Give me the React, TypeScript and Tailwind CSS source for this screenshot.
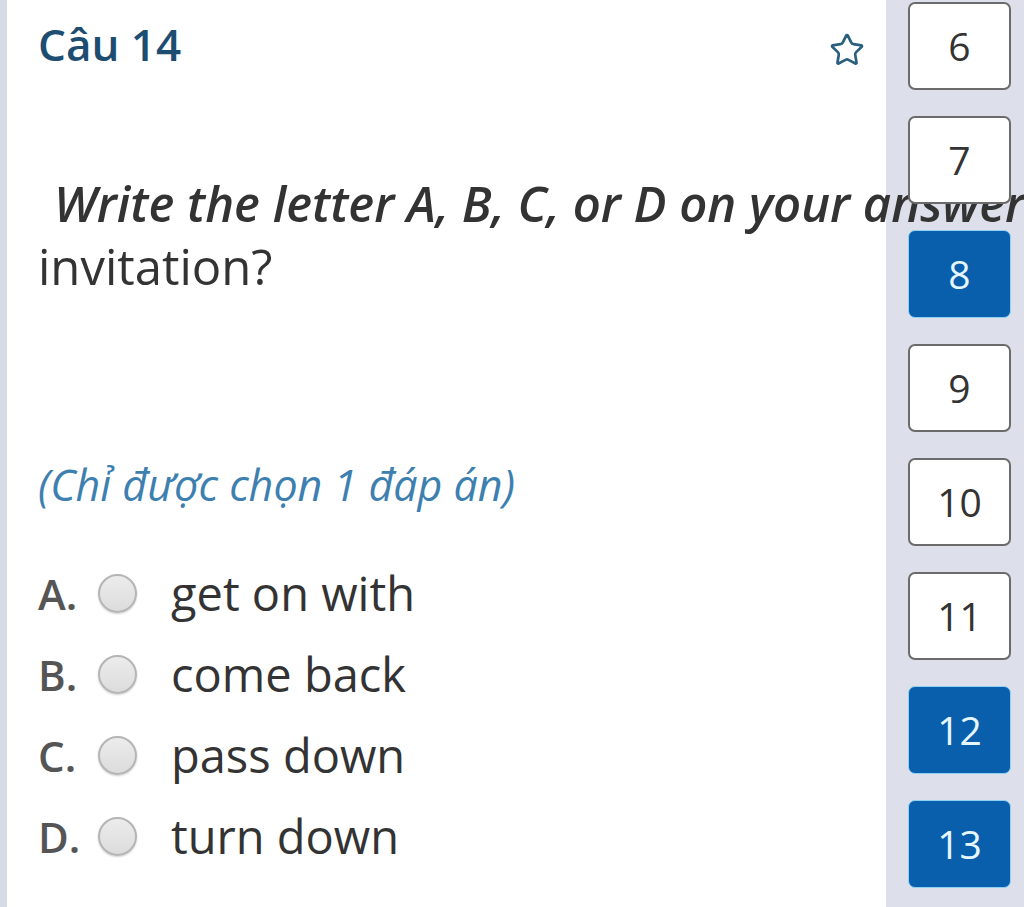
import { Star } from "lucide-react";

const numbers = [
  { n: 6, done: false },
  { n: 7, done: false },
  { n: 8, done: true },
  { n: 9, done: false },
  { n: 10, done: false },
  { n: 11, done: false },
  { n: 12, done: true },
  { n: 13, done: true },
];

const options = [
  { key: "A", text: "get on with" },
  { key: "B", text: "come back" },
  { key: "C", text: "pass down" },
  { key: "D", text: "turn down" },
];

function NavButton({ n, done }: { n: number; done: boolean }) {
  return (
    <div
      className={`relative z-10 w-[103px] h-[88px] rounded-[7px] flex items-center justify-center text-[39px] ${
        done
          ? "bg-[#0a5fad] border border-[#8fd2f6] text-[#e6f7ff]"
          : "bg-white border-2 border-[#6b6b6b] text-[#333]"
      }`}
    >
      {n}
    </div>
  );
}

export default function App() {
  return (
    <div
      className="w-[1024px] h-[907px] overflow-hidden flex bg-white"
      style={{ fontFamily: '"Open Sans", "Noto Sans", sans-serif' }}
    >
      <div className="w-[7px] shrink-0 bg-[#d6dbe6]" />
      <div className="relative z-[1] flex-1 min-w-0 pl-[31px] pt-[14px]">
        <div className="flex items-start justify-between pr-[21px]">
          <h1 className="text-[44px] leading-[60px] font-semibold text-[#1d4d70]">Câu 14</h1>
          <Star className="mt-[18px] w-[36px] h-[36px] text-[#2b5f80]" strokeWidth={1.8} />
        </div>

        <div className="mt-[98px] text-[49px] leading-[63px] text-[#333]">
          <div className="whitespace-nowrap italic font-semibold pl-[16px]">
            Write the letter A, B, C, or D on your answer sheet to indicate the correct answer
          </div>
          <div>invitation?</div>
        </div>

        <div className="mt-[158px] text-[43px] italic text-[#3d80b0] leading-[58px]">
          (Chỉ được chọn 1 đáp án)
        </div>

        <div className="mt-[39px] flex flex-col">
          {options.map((o) => (
            <label key={o.key} className="flex items-center h-[81px]">
              <span className="w-[60px] text-[42px] font-semibold text-[#555]">{o.key}.</span>
              <span className="w-[39px] h-[39px] rounded-full border-2 border-[#b5b5b5] bg-gradient-to-b from-[#ececec] to-[#dcdcdc] shadow-[0_1px_2px_rgba(0,0,0,0.2)]" />
              <span className="ml-[34px] text-[47px] text-[#333]">{o.text}</span>
            </label>
          ))}
        </div>
      </div>
      <div className="w-[138px] shrink-0 bg-[#dde0ea] flex flex-col items-start pl-[22px] gap-[26px] pt-[2px]">
        {numbers.map((b) => (
          <NavButton key={b.n} n={b.n} done={b.done} />
        ))}
      </div>
    </div>
  );
}
